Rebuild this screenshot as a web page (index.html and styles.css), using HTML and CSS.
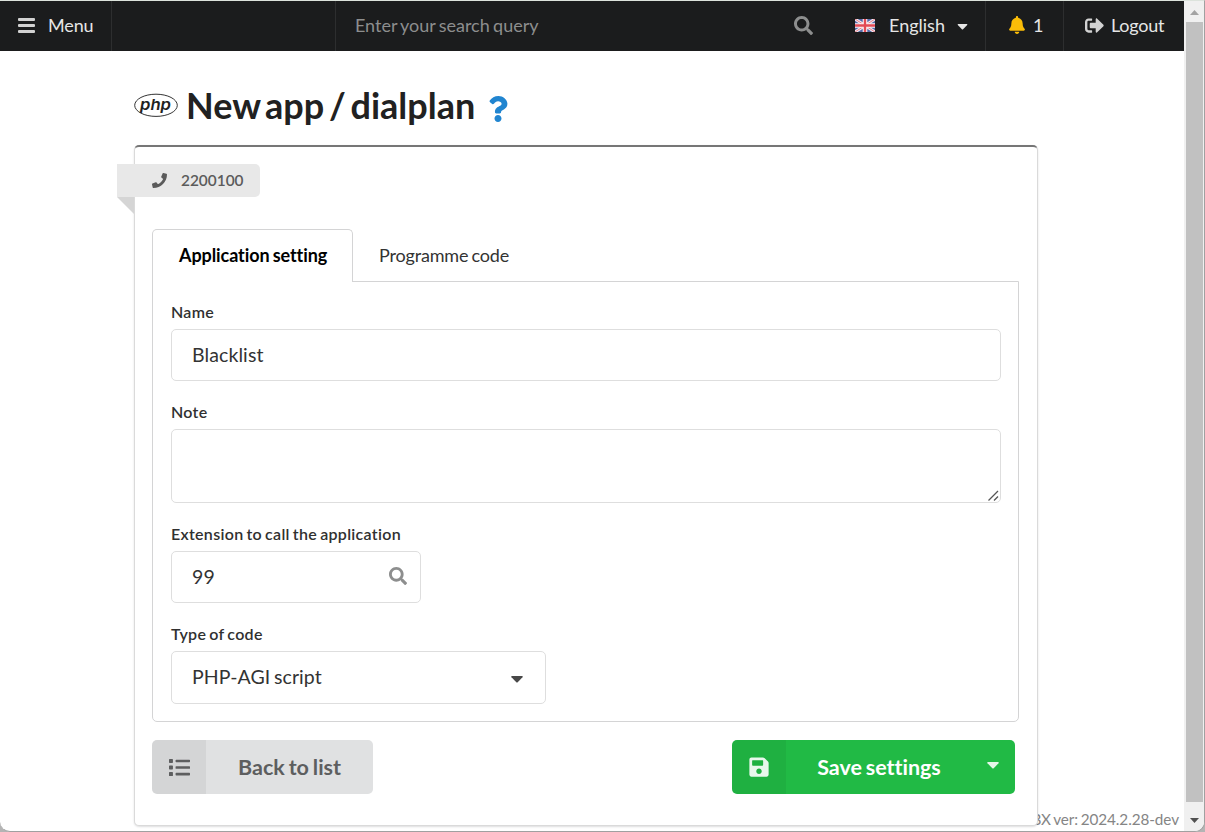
FILE: index.html
```html
<!DOCTYPE html>
<html lang="en">
<head>
<meta charset="utf-8">
<title>New app / dialplan</title>
<link rel="stylesheet" href="styles.css">
</head>
<body>
<div class="window">
  <div class="viewport">
    <nav class="topbar">
      <a class="nav-menu"><svg class="i-bars" viewBox="0 0 17 15"><rect y="0" width="17" height="3" rx="1"/><rect y="6" width="17" height="3" rx="1"/><rect y="12" width="17" height="3" rx="1"/></svg>Menu</a>
      <div class="nav-gap"></div>
      <div class="nav-search"><span>Enter your search query</span><svg class="i-search" viewBox="0 0 512 512"><path d="M505 442.700L405.300 343c-4.500-4.500-10.600-7-17-7H372c27.600-35.300 44-79.700 44-128C416 93.100 322.900 0 208 0S0 93.100 0 208s93.100 208 208 208c48.300 0 92.700-16.400 128-44v16.300c0 6.400 2.500 12.500 7 17l99.700 99.700c9.400 9.400 24.600 9.400 33.900 0l28.300-28.300c9.400-9.400 9.400-24.600.1-34zM208 336c-70.700 0-128-57.200-128-128 0-70.700 57.200-128 128-128 70.700 0 128 57.200 128 128 0 70.700-57.200 128-128 128z"/></svg></div>
      <div class="nav-lang"><svg class="flag" viewBox="0 0 20 13"><rect width="20" height="13" fill="#5469a8"/><path d="M0 0L20 13M20 0L0 13" stroke="#f4e9ee" stroke-width="3"/><path d="M0 0L20 13M20 0L0 13" stroke="#e67f89" stroke-width="1"/><path d="M10 0V13M0 6.500H20" stroke="#fbf3f5" stroke-width="4.600"/><path d="M10 0V13M0 6.500H20" stroke="#e34b55" stroke-width="2.400"/></svg><span>English</span><svg class="i-caret" viewBox="0 0 10 6"><path d="M.5 0h9q.7.300.2 1L5.600 5.300q-.6.500-1.200 0L.3 1Q-.2.300.5 0z"/></svg></div>
      <div class="nav-bell"><svg class="i-bell" viewBox="0 0 448 512"><path d="M224 512c35.320 0 63.970-28.650 63.970-64H160.030c0 35.350 28.650 64 63.970 64zm215.390-149.710c-19.320-20.760-55.470-51.990-55.470-154.290 0-77.700-54.480-139.900-127.940-155.160V32c0-17.670-14.320-32-31.980-32s-31.980 14.330-31.980 32v20.840C118.560 68.100 64.080 130.300 64.080 208c0 102.300-36.150 133.530-55.470 154.290-6 6.450-8.660 14.160-8.610 21.710.11 16.400 12.980 32 32.100 32h383.800c19.120 0 32-15.600 32.100-32 .05-7.550-2.610-15.270-8.610-21.710z"/></svg>1</div>
      <a class="nav-logout"><svg class="i-logout" viewBox="0 0 512 512"><path d="M497 273L329 441c-15 15-41 4.500-41-17v-96H152c-13.300 0-24-10.700-24-24v-96c0-13.300 10.700-24 24-24h136V88c0-21.400 25.900-32 41-17l168 168c9.300 9.400 9.300 24.600 0 34zM192 436v-40c0-6.600-5.400-12-12-12H96c-17.700 0-32-14.300-32-32V160c0-17.700 14.300-32 32-32h84c6.600 0 12-5.400 12-12V76c0-6.600-5.400-12-12-12H96c-53 0-96 43-96 96v192c0 53 43 96 96 96h84c6.600 0 12-5.400 12-12z"/></svg>Logout</a>
    </nav>
    <main class="page">
      <h1 class="title"><svg class="php" viewBox="0 0 44 25"><ellipse cx="22" cy="12.300" rx="21.300" ry="11.100"/><text x="21.500" y="16.500" text-anchor="middle" textLength="31" lengthAdjust="spacingAndGlyphs">php</text></svg><span>New app / dialplan</span><svg class="i-question" viewBox="0 0 384 512"><path d="M202.021 0C122.202 0 70.503 32.703 29.914 91.026c-7.363 10.580-5.093 25.086 5.178 32.874l43.138 32.709c10.373 7.865 25.132 6.026 33.253-4.148 25.049-31.381 43.630-49.449 82.757-49.449 30.764 0 68.816 19.799 68.816 49.631 0 22.552-18.617 34.134-48.993 51.164-35.423 19.860-82.299 44.576-82.299 106.405V320c0 13.255 10.745 24 24 24h72.471c13.255 0 24-10.745 24-24v-5.773c0-42.860 125.268-44.645 125.268-160.627C377.504 66.256 286.902 0 202.021 0zM192 373.459c-38.196 0-69.271 31.075-69.271 69.271 0 38.195 31.075 69.270 69.271 69.270s69.271-31.075 69.271-69.271-31.075-69.270-69.271-69.270z"/></svg></h1>
      <section class="card">
        <div class="ribbon"><svg class="i-phone" viewBox="0 0 512 512"><path d="M493.400 24.600l-104-24c-11.300-2.600-22.900 3.300-27.500 13.900l-48 112c-4.200 9.800-1.400 21.300 6.900 28l60.600 49.600c-36 76.700-98.900 140.500-177.200 177.200l-49.600-60.600c-6.800-8.300-18.200-11.100-28-6.900l-112 48C3.900 366.500-2 378.100.6 389.400l24 104C27.100 504.200 36.700 512 48 512c256.100 0 464-207.500 464-464 0-11.200-7.700-20.900-18.600-23.400z"/></svg><span>2200100</span></div>
        <div class="tabs"><a class="tab active">Application setting</a><a class="tab">Programme code</a></div>
        <div class="segment">
          <div class="field"><label>Name</label><div class="input">Blacklist</div></div>
          <div class="field"><label>Note</label><div class="input area"><svg class="grip" viewBox="0 0 11 11"><path d="M.5 10.500L10 1M6 10.500L10 6.500"/></svg></div></div>
          <div class="field"><label>Extension to call the application</label><div class="input extension">99<svg class="i-search" viewBox="0 0 512 512"><path d="M505 442.700L405.300 343c-4.500-4.500-10.600-7-17-7H372c27.600-35.300 44-79.700 44-128C416 93.100 322.900 0 208 0S0 93.100 0 208s93.100 208 208 208c48.300 0 92.700-16.400 128-44v16.300c0 6.400 2.500 12.500 7 17l99.700 99.700c9.400 9.400 24.600 9.400 33.900 0l28.300-28.300c9.400-9.400 9.400-24.600.1-34zM208 336c-70.700 0-128-57.200-128-128 0-70.700 57.200-128 128-128 70.700 0 128 57.200 128 128 0 70.700-57.200 128-128 128z"/></svg></div></div>
          <div class="field"><label>Type of code</label><div class="input select">PHP-AGI script<svg class="i-caret" viewBox="0 0 10 6"><path d="M.5 0h9q.7.300.2 1L5.600 5.300q-.6.500-1.200 0L.3 1Q-.2.300.5 0z"/></svg></div></div>
        </div>
        <div class="actions">
          <a class="button back"><span class="button-icon"><svg class="i-list" viewBox="0 0 512 512"><path d="M80 368H16a16 16 0 0 0-16 16v64a16 16 0 0 0 16 16h64a16 16 0 0 0 16-16v-64a16 16 0 0 0-16-16zm0-320H16A16 16 0 0 0 0 64v64a16 16 0 0 0 16 16h64a16 16 0 0 0 16-16V64a16 16 0 0 0-16-16zm0 160H16a16 16 0 0 0-16 16v64a16 16 0 0 0 16 16h64a16 16 0 0 0 16-16v-64a16 16 0 0 0-16-16zm416 176H176a16 16 0 0 0-16 16v32a16 16 0 0 0 16 16h320a16 16 0 0 0 16-16v-32a16 16 0 0 0-16-16zm0-320H176a16 16 0 0 0-16 16v32a16 16 0 0 0 16 16h320a16 16 0 0 0 16-16V80a16 16 0 0 0-16-16zm0 160H176a16 16 0 0 0-16 16v32a16 16 0 0 0 16 16h320a16 16 0 0 0 16-16v-32a16 16 0 0 0-16-16z"/></svg></span><span class="button-text">Back to list</span></a>
          <a class="button save"><span class="button-icon"><svg class="i-save" viewBox="0 0 448 512"><path d="M433.941 129.941l-83.882-83.882A48 48 0 0 0 316.118 32H48C21.490 32 0 53.490 0 80v352c0 26.510 21.490 48 48 48h352c26.510 0 48-21.490 48-48V163.882a48 48 0 0 0-14.059-33.941zM224 416c-35.346 0-64-28.654-64-64 0-35.346 28.654-64 64-64s64 28.654 64 64c0 35.346-28.654 64-64 64zm96-304.520V212c0 6.627-5.373 12-12 12H76c-6.627 0-12-5.373-12-12V108c0-6.627 5.373-12 12-12h228.520c3.183 0 6.235 1.264 8.485 3.515l3.480 3.480A11.996 11.996 0 0 1 320 111.480z"/></svg></span><span class="button-text">Save settings</span><span class="button-drop"><svg class="i-caret" viewBox="0 0 10 6"><path d="M.5 0h9q.7.300.2 1L5.600 5.300q-.6.500-1.200 0L.3 1Q-.2.300.5 0z"/></svg></span></a>
        </div>
      </section>
    </main>
    <div class="version"><span>PBX ver: 2024.2.28-dev</span></div>
  </div>
  <div class="scrollbar"><svg viewBox="0 0 9 5"><path fill="#a3a3a3" d="M4.500 0L9 5H0z"/></svg><div class="thumb"></div><svg viewBox="0 0 9 5"><path fill="#505050" d="M0 0h9L4.500 5z"/></svg></div>
</div>
</body>
</html>
```
FILE: styles.css
```css
* { box-sizing: border-box; }
body { margin: 0; width: 1205px; height: 832px; overflow: hidden; background: #b4b4b4; font-family: Lato, "Liberation Sans", sans-serif; }
svg { display: block; flex: none; fill: currentColor; }
.window { display: flex; width: 1205px; height: 832px; border: solid #a0a0a0; border-width: 1px 1px 1px 0; border-top-color: #dce3dc; border-radius: 0 0 10px 10px; overflow: hidden; background: #fff; }
.viewport { position: relative; width: 1184px; height: 830px; }

.topbar { display: flex; height: 50px; background: #1b1c1d; color: #e6e6e6; font-size: 18px; letter-spacing: -.15px; line-height: 48px; }
.topbar > * { display: flex; align-items: center; padding-bottom: 2px; border-right: 1px solid #2d2e2f; }
.nav-menu { width: 112px; padding-left: 18px; gap: 13px; }
.i-bars { width: 17px; height: 15px; color: #d2d2d2; }
.nav-gap { width: 224px; }
.topbar .nav-search { width: 498px; padding: 0 21px 2px 19px; justify-content: space-between; color: #8d8e8e; border: 0; letter-spacing: -.02px; word-spacing: -1.200px; }
.i-search { width: 19px; height: 19px; color: #8d8e8e; }
.topbar .nav-lang { width: 152px; padding-left: 21px; letter-spacing: 0; }
.flag { width: 20px; height: 13px; margin-right: 14px; }
.i-caret { width: 11px; height: 6px; }
.nav-lang .i-caret { margin: 3px 0 0 12px; }
.nav-bell { width: 78px; padding-left: 24px; gap: 8px; }
.nav-bell .i-bell { margin-left: -1px; }
.i-bell { width: 16px; height: 18px; color: #fbbd08; }
.topbar .nav-logout { flex: 1; padding-left: 21px; gap: 7px; border: 0; letter-spacing: -.25px; }
.i-logout { width: 19px; height: 19px; color: #d2d2d2; }

.page { width: 904px; margin: 0 0 0 134px; padding-top: 29px; }
.title { display: flex; align-items: center; height: 50px; margin: 0 0 15px; color: #212121; font-size: 36px; font-weight: 700; word-spacing: -4px; line-height: 50px; }
.title span { width: 289px; white-space: nowrap; }
.php { width: 44px; height: 25px; margin-right: 8px; }
.php ellipse { fill: none; stroke: #333; stroke-width: 1; }
.php text { font: italic 600 15px Inter, "Liberation Sans", sans-serif; }
.i-question { width: 20px; height: 26px; margin: 7px 0 0 13px; color: #2185d0; }

.card { position: relative; z-index: 1; height: 681px; padding: 17px; background: #fff; border: 1px solid #dadada; border-top: 2px solid #767676; border-radius: 5px; box-shadow: 0 1px 2px rgba(34,36,38,.15); }
.ribbon { position: relative; display: flex; align-items: center; width: 143px; height: 33px; margin-left: -35px; padding-left: 35px; gap: 14px; border-radius: 0 5px 5px 0; background: #e8e8e8; color: #5b5b5b; font-size: 15.400px; font-weight: 600; }
.ribbon span { margin-top: -2px; }
.ribbon::after { content: ""; position: absolute; left: 0; top: 100%; border: solid transparent; border-width: 0 17px 17px 0; border-right-color: #d5d5d5; }
.i-phone { width: 15px; height: 15px; }
.tabs { display: flex; height: 53px; margin-top: 32px; }
.tab { display: flex; align-items: center; padding: 0 0 2px 26px; color: #333; font-size: 18px; letter-spacing: -.17px; word-spacing: -1.200px; }
.tab.active { position: relative; z-index: 1; width: 201px; background: #fff; border: 1px solid #d4d4d5; border-bottom: 0; border-radius: 5px 5px 0 0; color: #000; font-weight: 700; letter-spacing: -.08px; }
.segment { display: flex; flex-direction: column; gap: 19px; width: 867px; height: 441px; margin-top: -1px; padding: 18px 17px 17px 18px; border: 1px solid #d4d4d5; border-radius: 0 0 5px 5px; }
.field label { display: block; height: 29px; color: #303030; font-size: 16px; font-weight: 600; letter-spacing: .3px; word-spacing: -1.200px; line-height: 24px; }
.input { display: flex; align-items: center; height: 53px; padding: 0 20px 2px; border: 1px solid #dedede; border-radius: 5px; color: #333; font-size: 19.500px; letter-spacing: .1px; word-spacing: -1.500px; }
.field:first-child .input, .extension { height: 52px; }
.area { position: relative; height: 74px; }
.grip { position: absolute; right: 1px; bottom: 1px; width: 11px; height: 11px; fill: none; stroke: #555; stroke-width: 1.300; }
.extension { width: 250px; padding-right: 13px; justify-content: space-between; }
.extension .i-search { width: 18px; height: 18px; }
.select { width: 375px; justify-content: space-between; }
.select .i-caret { width: 12px; height: 7px; margin: 5px 2px 0 0; color: #484848; }

.actions { display: flex; justify-content: space-between; width: 863px; margin-top: 18px; }
.button { display: flex; align-items: center; height: 54px; border-radius: 5px; overflow: hidden; font-size: 21.500px; font-weight: 700; letter-spacing: -.04px; word-spacing: -1.200px; }
.button-icon { display: flex; align-items: center; justify-content: center; width: 54px; height: 54px; background: rgba(0,0,0,.05); }
.button-text { flex: 1; text-align: center; }
.back { width: 221px; background: #e0e1e2; color: #5d5e5f; }
.i-list { width: 21px; height: 21px; }
.save { width: 283px; background: #21ba45; color: #fff; }
.i-save { width: 20px; height: 22px; color: #e8f7ec; }
.button-drop { width: 43px; }
.button-drop .i-caret { width: 12px; height: 7px; margin: -4px 0 0 15px; color: #e4f6e8; }

.version { position: absolute; right: 5px; bottom: 2px; color: #858585; font-size: 15.300px; letter-spacing: -.08px; word-spacing: -1.200px; line-height: 20px; }
.scrollbar { display: flex; flex-direction: column; align-items: center; width: 20px; height: 830px; padding: 9px 0 8px; background: #f0f0f0; }
.scrollbar svg { width: 9px; height: 5px; }
.thumb { width: 17px; height: 780px; margin: 7px 0 16px; background: #c1c1c1; }
```
